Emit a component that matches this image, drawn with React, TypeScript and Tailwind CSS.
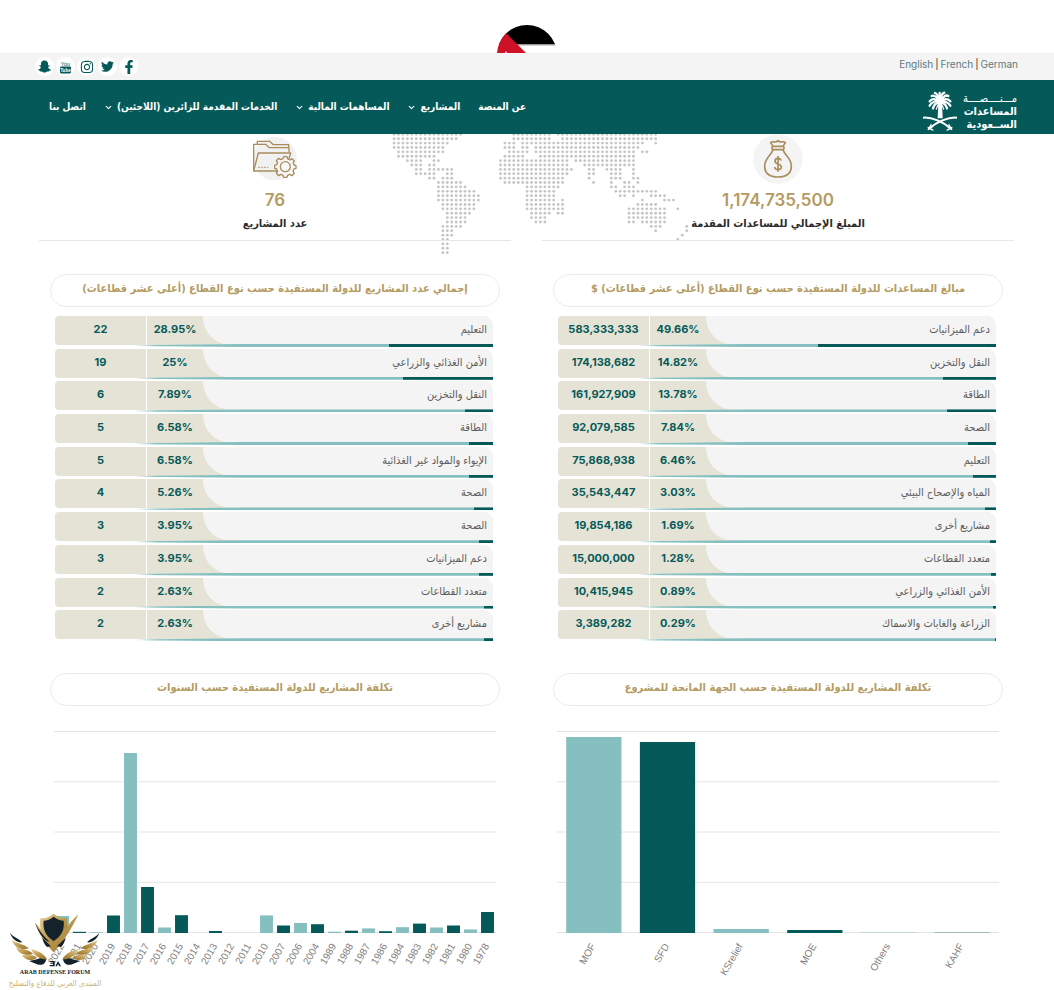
import { ChevronDown } from "lucide-react";
import { FaFacebookF, FaInstagram, FaSnapchatGhost, FaTwitter } from "react-icons/fa";

type Sector = { name: string; percent: string; value: string };
type Bar = { label: string; height: number };

const navItems = [
  { label: "عن المنصة", menu: false },
  { label: "المشاريع", menu: true },
  { label: "المساهمات المالية", menu: true },
  { label: "الخدمات المقدمة للزائرين (اللاجئين)", menu: true },
  { label: "اتصل بنا", menu: false },
];

const amounts: Sector[] = [
  { name: "دعم الميزانيات", percent: "49.66%", value: "583,333,333" },
  { name: "النقل والتخزين", percent: "14.82%", value: "174,138,682" },
  { name: "الطاقة", percent: "13.78%", value: "161,927,909" },
  { name: "الصحة", percent: "7.84%", value: "92,079,585" },
  { name: "التعليم", percent: "6.46%", value: "75,868,938" },
  { name: "المياه والإصحاح البيئي", percent: "3.03%", value: "35,543,447" },
  { name: "مشاريع أخرى", percent: "1.69%", value: "19,854,186" },
  { name: "متعدد القطاعات", percent: "1.28%", value: "15,000,000" },
  { name: "الأمن الغذائي والزراعي", percent: "0.89%", value: "10,415,945" },
  { name: "الزراعة والغابات والاسماك", percent: "0.29%", value: "3,389,282" },
];

const projects: Sector[] = [
  { name: "التعليم", percent: "28.95%", value: "22" },
  { name: "الأمن الغذائي والزراعي", percent: "25%", value: "19" },
  { name: "النقل والتخزين", percent: "7.89%", value: "6" },
  { name: "الطاقة", percent: "6.58%", value: "5" },
  { name: "الإيواء والمواد غير الغذائية", percent: "6.58%", value: "5" },
  { name: "الصحة", percent: "5.26%", value: "4" },
  { name: "الصحة", percent: "3.95%", value: "3" },
  { name: "دعم الميزانيات", percent: "3.95%", value: "3" },
  { name: "متعدد القطاعات", percent: "2.63%", value: "2" },
  { name: "مشاريع أخرى", percent: "2.63%", value: "2" },
];

const donors: Bar[] = [
  { label: "MOF", height: 196 },
  { label: "SFD", height: 191 },
  { label: "KSrelief", height: 4 },
  { label: "MOE", height: 3 },
  { label: "Others", height: 0.4 },
  { label: "KAHF", height: 0.3 },
];

const years: Bar[] = [
  { label: "2022", height: 17 },
  { label: "2021", height: 1.2 },
  { label: "2020", height: 0.7 },
  { label: "2019", height: 17.5 },
  { label: "2018", height: 180 },
  { label: "2017", height: 46 },
  { label: "2016", height: 5.5 },
  { label: "2015", height: 17.8 },
  { label: "2014", height: 0 },
  { label: "2013", height: 2 },
  { label: "2012", height: 0 },
  { label: "2011", height: 0 },
  { label: "2010", height: 17.6 },
  { label: "2007", height: 7.5 },
  { label: "2006", height: 10 },
  { label: "2004", height: 8.8 },
  { label: "1989", height: 1.3 },
  { label: "1988", height: 2.3 },
  { label: "1987", height: 4.6 },
  { label: "1986", height: 1.8 },
  { label: "1984", height: 5.8 },
  { label: "1983", height: 9.4 },
  { label: "1982", height: 5.5 },
  { label: "1981", height: 7.5 },
  { label: "1980", height: 3.6 },
  { label: "1978", height: 21 },
];

// each row of the dotted map is a list of [start, end] runs
const mapRows: number[][][] = [
  [[38, 250], [398, 515], [528, 825]],
  [[38, 228], [400, 510], [545, 812], [825, 830]],
  [[38, 200], [375, 410], [430, 535], [550, 790], [822, 826]],
  [[38, 186], [375, 402], [430, 440], [465, 540], [550, 780]],
  [[48, 185], [385, 440], [465, 512], [520, 765], [790, 800]],
  [[58, 170], [375, 435], [480, 510], [525, 765]],
  [[75, 120], [158, 172], [365, 570], [580, 765]],
  [[90, 120], [150, 165], [358, 570], [610, 760]],
  [[100, 128], [152, 160], [170, 220], [355, 572], [620, 645], [680, 725], [760, 765]],
  [[112, 165], [205, 215], [355, 558], [625, 645], [685, 725], [755, 765]],
  [[150, 165], [180, 222], [360, 550], [630, 635], [690, 722], [755, 775]],
  [[170, 240], [370, 545], [640, 645], [690, 695], [735, 752], [770, 775]],
  [[170, 260], [433, 540], [695, 706], [735, 765]],
  [[170, 285], [435, 525], [700, 770], [785, 825]],
  [[170, 300], [440, 525], [712, 735], [755, 765], [805, 860]],
  [[178, 300], [440, 520], [545, 550], [790, 795], [850, 880]],
  [[185, 290], [440, 520], [536, 550], [770, 780], [790, 835]],
  [[190, 285], [440, 520], [535, 545], [743, 850], [885, 890]],
  [[197, 270], [450, 510], [535, 545], [740, 855]],
  [[197, 260], [452, 500], [745, 855]],
  [[197, 255], [460, 495], [745, 765], [790, 850]],
  [[190, 240], [812, 840], [922, 926]],
  [[190, 222], [828, 833], [912, 920]],
  [[186, 212], [903, 908]],
  [[186, 208], [896, 902]],
  [[186, 205]],
  [[186, 205]],
  [[192, 210]],
];

function WorldMap() {
  const dots: { x: number; y: number }[] = [];
  mapRows.forEach((runs, row) => {
    for (let col = 0; col < 70; col++) {
      const x = 29 + col * 13.3;
      if (runs.some(([from, to]) => x >= from - 4 && x <= to + 4)) {
        dots.push({ x, y: 403 + row * 13.15 });
      }
    }
  });

  return (
    <svg viewBox="0 402 960 372" className="absolute top-0 left-1/2 -ml-[147px] w-[320px]" aria-hidden="true">
      {dots.map((dot) => (
        <circle key={`${dot.x}-${dot.y}`} cx={dot.x} cy={dot.y} r="4.3" fill="#c6c6c6" />
      ))}
    </svg>
  );
}

function YouTubeIcon() {
  return (
    <svg viewBox="0 0 14 16" className="h-[15px] w-[13px]" aria-hidden="true">
      <text x="7" y="7" textAnchor="middle" fontSize="6" fontFamily="Liberation Sans, sans-serif" fill="#055a59">
        You
      </text>
      <rect x="1" y="8" width="12" height="7.5" rx="1.5" fill="#055a59" />
      <text x="7" y="14" textAnchor="middle" fontSize="5" fontWeight="700" fontFamily="Liberation Sans, sans-serif" fill="#fff">
        Tube
      </text>
    </svg>
  );
}

const socials = [
  { label: "Facebook", icon: <FaFacebookF size={14} /> },
  { label: "Twitter", icon: <FaTwitter size={13} /> },
  { label: "Instagram", icon: <FaInstagram size={14} /> },
  { label: "YouTube", icon: <YouTubeIcon /> },
  { label: "Snapchat", icon: <FaSnapchatGhost size={13} /> },
];

function Emblem() {
  return (
    <svg viewBox="0 0 102 120" className="h-10 w-[34px]" fill="none" stroke="#fff" aria-hidden="true">
      <path d="M46 36h11l2 46H44z" fill="#fff" stroke="none" />
      <g strokeWidth="7" strokeLinecap="round">
        <path d="M51 32C47 16 42 8 36 6M51 32C52 16 56 8 64 5M51 32C40 16 32 12 26 15M51 32C60 16 70 11 76 15" />
        <path d="M51 32C38 22 26 22 20 31M51 32C62 22 76 22 82 31M51 34C38 28 26 34 20 44M51 34C63 28 76 34 82 44" />
        <path d="M51 36C40 34 33 42 30 52M51 36C62 34 69 42 72 52M50 20V6" />
        <path d="M50 38C43 42 41 48 40 54M52 38C59 42 61 48 62 54" strokeWidth="4" />
      </g>
      <path d="M0 80C26 78 62 92 84 114M102 80C76 78 40 92 18 114" strokeWidth="6" />
      <path d="M14 109l17 9M25 100l-10 17M88 109l-17 9M77 100l10 17" strokeWidth="4" />
    </svg>
  );
}

function MoneyBagIcon() {
  return (
    <svg viewBox="0 0 150 150" className="h-[50px] w-[50px]" fill="none" stroke="#a98d5d" strokeWidth="5" strokeLinejoin="round" aria-hidden="true">
      <circle cx="75" cy="75" r="74" fill="#f4f4f4" stroke="none" />
      <path d="M60 37L53 26C60 18 66 30 75 20C84 30 90 18 97 26L90 37" />
      <rect x="57" y="37" width="36" height="10" rx="4" />
      <path d="M60 47C54 66 35 72 35 96C35 120 51 129 75 129C99 129 115 120 115 96C115 72 96 66 90 47" />
      <path d="M84 80C82 70 66 71 66 81C66 92 85 88 85 99C85 110 66 109 65 99M75 66V113" />
    </svg>
  );
}

function FolderIcon() {
  return (
    <svg viewBox="0 0 150 150" className="h-[50px] w-[50px] overflow-visible" fill="none" stroke="#a98d5d" strokeWidth="4" strokeLinejoin="round" aria-hidden="true">
      <circle cx="75" cy="74" r="65" fill="#f1f1f1" stroke="none" />
      <path d="M81 111H11V31H47L58 41H117V55M22 31V22H59L70 32H116V41" />
      <path d="M11 111L25 57H122L116 77" />
      <path d="M25 100h30" strokeDasharray="4 5" />
      <g transform="translate(106 98)" fill="#f8f8f8">
        <path d="M-5-30H5L7-23L14-20L20-24L27-17L23-11L26-5L32-3V5L26 7L23 14L27 20L20 27L13 23L7 26L5 32H-5L-7 26L-14 23L-20 27L-27 20L-23 14L-26 7L-32 5V-4L-26-6L-23-12L-27-18L-20-25L-14-21L-7-24Z" />
        <circle r="15" />
      </g>
    </svg>
  );
}

function Stat({ icon, value, label }: { icon: React.ReactNode; value: string; label: string }) {
  return (
    <div className="flex flex-1 flex-col items-center border-b border-[#e6e6e6] pb-1">
      {icon}
      <p className="mt-1 font-[Inter,sans-serif] text-[17px] leading-6 font-semibold text-[#b49b62]">{value}</p>
      <p className="text-[11px] leading-6 font-bold text-[#2b2b2b]">{label}</p>
    </div>
  );
}

function PanelTitle({ children }: { children: React.ReactNode }) {
  return (
    <h2 className="h-[33px] rounded-full border border-[#ebebeb] text-center text-[11px] leading-7 font-bold whitespace-nowrap text-[#b49b62]">
      {children}
    </h2>
  );
}

function SectorPanel({ title, rows }: { title: string; rows: Sector[] }) {
  return (
    <section className="flex-1 px-[11px]">
      <PanelTitle>{title}</PanelTitle>
      <div className="mt-[9px] pr-[7px] pl-[5px]">
        <table className="h-[327px] w-full table-fixed border-collapse">
          <colgroup>
            <col />
            <col className="w-[56px]" />
            <col className="w-[92px]" />
          </colgroup>
          <tbody>
            {rows.map((row, i) => (
              <tr key={i} className="relative align-top">
                <td className="p-0">
                  <div className="rounded-tr-[10px] bg-[#e5e3d6]">
                    <div className="h-[29px] rounded-tr-[10px] rounded-bl-[28px] bg-[#f4f4f4] pr-[6px] text-[11px] leading-[27px] text-[#5c5c5c]">
                      {row.name}
                    </div>
                  </div>
                  <div className="absolute top-[28px] right-0 flex h-[3px] w-[82%] bg-linear-to-r from-transparent to-[#86bfc0] to-6% [clip-path:polygon(0_40%,30%_0,100%_0,100%_100%,30%_100%,0_70%)]">
                    <span className="bg-[#055a59]" style={{ width: row.percent }} />
                  </div>
                </td>
                <td className="p-0 font-[Inter,sans-serif] text-[11px] font-bold text-[#055a59]">
                  <div dir="ltr" className="h-[29px] bg-[#e5e3d6] text-center leading-[27px]">{row.percent}</div>
                </td>
                <td className="p-0 font-[Inter,sans-serif] text-[11px] font-bold text-[#055a59]">
                  <div className="mr-px h-[29px] rounded-l-[4px] bg-[#e5e3d6] text-center leading-[27px]">{row.value}</div>
                </td>
              </tr>
            ))}
          </tbody>
        </table>
      </div>
    </section>
  );
}

function BarChart({ bars, ratio }: { bars: Bar[]; ratio: number }) {
  const step = 442 / bars.length;
  const width = step * ratio;

  return (
    <svg viewBox="0 0 442 258" className="w-full overflow-visible [direction:ltr]" role="img">
      {[0.5, 50.8, 101, 151.3, 201.5].map((y) => (
        <line key={y} x1="0" x2="442" y1={y} y2={y} stroke="#e4e4e4" />
      ))}
      {bars.map((bar, i) => {
        const center = step * (i + 0.5);
        return (
          <g key={bar.label}>
            <rect
              x={center - width / 2}
              y={202 - bar.height}
              width={width}
              height={bar.height}
              fill={i % 2 ? "#055a59" : "#86bfc0"}
            />
            <text
              x={center + 2}
              y="215"
              textAnchor="end"
              transform={`rotate(-60 ${center + 2} 215)`}
              fontSize="10"
              fontFamily="Liberation Sans, Arial, sans-serif"
              fill="#808080"
            >
              {bar.label}
            </text>
          </g>
        );
      })}
    </svg>
  );
}

function ChartPanel({ title, bars, ratio }: { title: string; bars: Bar[]; ratio: number }) {
  return (
    <section className="flex-1 px-[11px]">
      <PanelTitle>{title}</PanelTitle>
      <div className="mt-[25px] pr-1 pl-1">
        <BarChart bars={bars} ratio={ratio} />
      </div>
    </section>
  );
}

function ForumMark() {
  return (
    <div className="absolute bottom-0 left-2 flex w-[94px] flex-col items-center" dir="ltr">
      <svg viewBox="24 18 276 164" className="w-[92px]" aria-hidden="true">
        <defs>
          <linearGradient id="gold" x1="0" x2="1" y1="0" y2="1">
            <stop offset="0" stopColor="#e9d09a" />
            <stop offset="0.5" stopColor="#bf9a4f" />
            <stop offset="1" stopColor="#8f6c2c" />
          </linearGradient>
        </defs>
        <path d="M158 20C146 30 132 35 118 34C114 68 124 96 158 118C192 96 202 68 198 34C184 35 170 30 158 20Z" fill="url(#gold)" />
        <path d="M102 47C120 62 138 94 157 112C176 88 204 48 232 22C214 62 188 104 158 136C134 112 112 80 102 47Z" fill="url(#gold)" />
        <path d="M158 29C148 37 138 41 128 41C125 68 134 86 158 102C182 86 191 68 188 41C178 41 168 37 158 29Z" fill="#14222b" />
        <path d="M102 47C112 68 128 88 146 104C134 104 116 86 102 47Z" fill="#14222b" />
        <path d="M124 92L150 118L138 120C130 112 126 102 124 92ZM194 92L168 118L180 120C188 112 192 102 194 92Z" fill="#14222b" />
        <g id="wing">
          <path d="M27 78C36 90 50 92 64 106C50 108 34 98 27 78Z" fill="#14222b" />
          <path d="M32 98C46 110 64 108 84 124C62 130 40 122 32 98Z" fill="url(#gold)" />
          <path d="M44 120C60 128 80 124 96 140C74 149 52 140 44 120Z" fill="url(#gold)" />
          <path d="M62 143C78 147 92 138 108 152C92 164 72 160 62 143Z" fill="url(#gold)" />
          <path d="M84 162C98 158 112 158 124 150C140 146 138 166 126 172C116 178 96 166 84 162Z" fill="#14222b" />
          <path d="M90 126C112 132 130 140 138 158C114 156 98 146 90 126Z" fill="url(#gold)" />
        </g>
        <use href="#wing" transform="translate(322 0) scale(-1 1)" />
        <path d="M146 162h15v16h-15v-4h10v-4h-8v-3h8v-2h-10zM163 178l8-16 9 16h-5l-4-7-3 7z" fill="#14222b" />
      </svg>
      <span className="font-['Liberation_Serif',serif] text-[6px] leading-[9px] font-bold whitespace-nowrap text-[#14222b]">
        ARAB DEFENSE FORUM
      </span>
      <span dir="rtl" className="text-[8px] leading-[13px] whitespace-nowrap text-[#d0b069]">
        المنتدى العربي للدفاع والتسليح
      </span>
    </div>
  );
}

export default function App() {
  return (
    <div
      dir="rtl"
      className="relative min-h-screen overflow-hidden bg-white font-['DejaVu_Sans_Condensed','DejaVu_Sans',sans-serif]"
    >
      <div className="flex h-[53px] items-start justify-center overflow-hidden pt-[25px]">
        <svg viewBox="0 0 60 60" className="h-[60px] w-[60px] shrink-0" role="img" aria-label="الأردن">
          <clipPath id="flag">
            <circle cx="30" cy="30" r="30" />
          </clipPath>
          <g clipPath="url(#flag)">
            <path d="M0 0h60v19.500H0z" fill="#000" />
            <path d="M0 19.500h60v1H0z" fill="#aaa" />
            <path d="M0 40h60v20H0z" fill="#007a3d" />
            <path d="M0-1L38 37L0 75z" fill="#ce1126" />
            <path d="M9 26l1.500 3h3l-2 3h-5l-2-3h3z" fill="#fff" />
          </g>
        </svg>
      </div>

      <div className="flex h-[27px] items-center justify-between bg-[#f4f4f4] pr-9 pl-[35px]">
        <div dir="ltr" className="flex gap-[2px] pb-[6px] font-[Inter,sans-serif] text-[10px] leading-4 text-[#5d7b80]">
          <a href="#en">English</a>
          <span className="text-[#2b2b2b]">|</span>
          <a href="#fr">French</a>
          <span className="text-[#2b2b2b]">|</span>
          <a href="#de">German</a>
        </div>
        <div className="flex gap-[2px]">
          {socials.map((social) => (
            <a
              key={social.label}
              href="#social"
              aria-label={social.label}
              className="flex h-[19px] w-[19px] items-center justify-center rounded-full bg-white text-[#055a59]"
            >
              {social.icon}
            </a>
          ))}
        </div>
      </div>

      <header className="flex h-[54px] items-center justify-between bg-[#055a59] pr-[37px] pl-[49px] text-white">
        <a href="#home" className="flex items-center gap-[6px] pt-2">
          <span className="flex flex-col text-[11px] leading-[13px] font-bold whitespace-nowrap">
            <span className="font-normal">مـــنــــصــــة</span>
            <span>المساعدات</span>
            <span>الســعودية</span>
          </span>
          <Emblem />
        </a>
        <nav className="flex items-center gap-[18px]">
          {navItems.map((item) => (
            <a key={item.label} href="#nav" className="flex items-center gap-1 text-[10px] leading-4 font-bold whitespace-nowrap">
              {item.label}
              {item.menu ? <ChevronDown size={9} strokeWidth={3} /> : null}
            </a>
          ))}
        </nav>
      </header>

      <main className="relative pr-10 pl-[39px]">
        <WorldMap />
        <div className="relative flex gap-[31px]">
          <Stat icon={<MoneyBagIcon />} value="1,174,735,500" label="المبلغ الإجمالي للمساعدات المقدمة" />
          <Stat icon={<FolderIcon />} value="76" label="عدد المشاريع" />
        </div>
        <div className="relative mt-[33px] flex gap-[31px]">
          <SectorPanel title="مبالغ المساعدات للدولة المستفيدة حسب نوع القطاع (أعلى عشر قطاعات) $" rows={amounts} />
          <SectorPanel title="إجمالي عدد المشاريع للدولة المستفيدة حسب نوع القطاع (أعلى عشر قطاعات)" rows={projects} />
        </div>
        <div className="mt-[30px] flex gap-[31px]">
          <ChartPanel title="تكلفة المشاريع للدولة المستفيدة حسب الجهة المانحة للمشروع" bars={donors} ratio={0.75} />
          <ChartPanel title="تكلفة المشاريع للدولة المستفيدة حسب السنوات" bars={years} ratio={0.76} />
        </div>
      </main>

      <ForumMark />
    </div>
  );
}
